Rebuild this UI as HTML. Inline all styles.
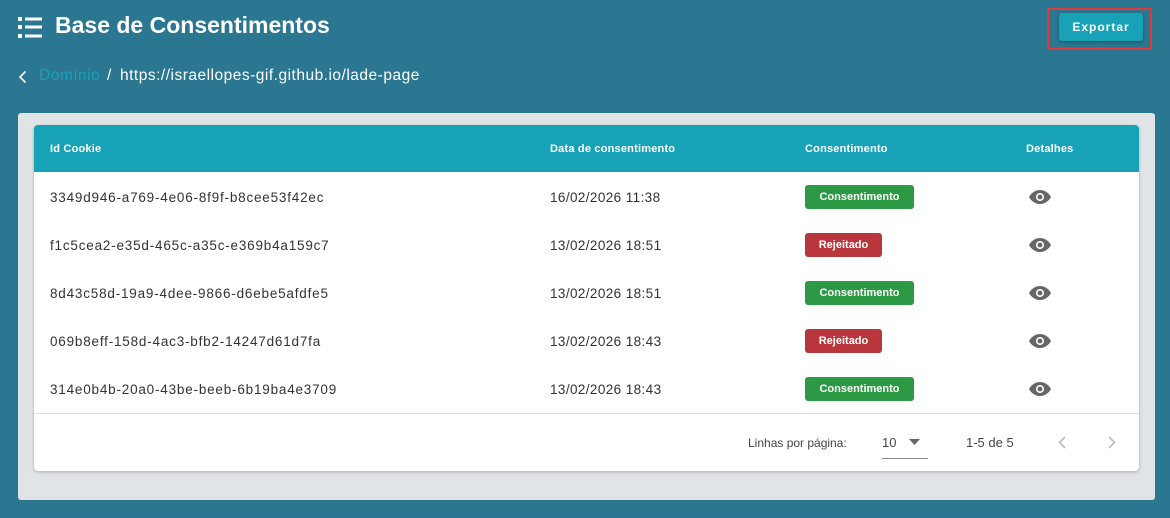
<!DOCTYPE html>
<html><head><meta charset="utf-8"><style>
*{margin:0;padding:0;box-sizing:border-box}
body{width:1170px;height:518px;background:#2b7691;font-family:"Liberation Sans",sans-serif;position:relative;overflow:hidden}
.a{position:absolute;white-space:nowrap}
.title{left:55px;top:12px;font-size:23px;font-weight:bold;color:#fff}
.bc{top:67px;font-size:15.5px;color:#fff;letter-spacing:0.5px}
.btnbox{left:1047px;top:8px;width:105px;height:42px;border:2px solid #e03a3e;border-radius:2px}
.btn{left:1059px;top:13px;width:84px;height:28px;background:#17a2b8;border-radius:3px;color:#fff;font-size:12px;font-weight:bold;letter-spacing:1px;text-align:center;line-height:28px;box-shadow:0 1px 3px rgba(0,0,0,.3)}
.panel{left:18px;top:113px;width:1137px;height:387px;background:#e1e4e7;border-radius:3px}
.card{left:34px;top:125px;width:1105px;height:346px;background:#fff;border-radius:4px;box-shadow:0 1px 3px rgba(0,0,0,.25);overflow:hidden}
.hdr{left:0;top:0;width:1105px;height:47px;background:#17a2b8}
.h{top:18px;font-size:11px;font-weight:bold;color:#fff;letter-spacing:0.2px}
.c{font-size:13.5px;color:#333;letter-spacing:0.4px}
.id{letter-spacing:0.8px}
.badge{height:24px;line-height:24px;color:#fff;font-size:11px;font-weight:bold;border-radius:3px;text-align:center}
.g{background:#2c9a45;width:109px}
.r{background:#b8363c;width:77px}
.line{left:0;top:288px;width:1105px;height:1px;background:#e0e0e0}
.p{font-size:12px;color:#444}
</style></head><body>
<svg class="a" style="left:18px;top:17px" width="25" height="22" viewBox="0 0 25 22"><g fill="#fff"><rect x="0" y="0" width="4" height="4"/><rect x="0" y="8" width="4" height="4"/><rect x="0" y="17" width="4" height="4"/><rect x="7" y="0.5" width="17" height="3"/><rect x="7" y="8.5" width="17" height="3"/><rect x="7" y="17.5" width="17" height="3"/></g></svg>
<div class="a title">Base de Consentimentos</div>
<svg class="a" style="left:18px;top:70px" width="10" height="14" viewBox="0 0 10 14"><path d="M7.5 1.5L2 7l5.5 5.5" stroke="#fff" stroke-width="1.6" fill="none"/></svg>
<div class="a bc" style="left:39px;color:#17a2b8">Domínio</div>
<div class="a bc" style="left:107px">/</div>
<div class="a bc" style="left:120px">https://israellopes-gif.github.io/lade-page</div>
<div class="a btnbox"></div>
<div class="a btn">Exportar</div>
<div class="a panel"></div>
<div class="a card">
 <div class="a hdr"></div>
 <div class="a h" style="left:16px">Id Cookie</div>
 <div class="a h" style="left:516px">Data de consentimento</div>
 <div class="a h" style="left:771px">Consentimento</div>
 <div class="a h" style="left:992px">Detalhes</div>

 <div class="a c id" style="left:16px;top:65px">3349d946-a769-4e06-8f9f-b8cee53f42ec</div>
 <div class="a c" style="left:516px;top:65px">16/02/2026 11:38</div>
 <div class="a badge g" style="left:771px;top:60px">Consentimento</div>

 <div class="a c id" style="left:16px;top:113px">f1c5cea2-e35d-465c-a35c-e369b4a159c7</div>
 <div class="a c" style="left:516px;top:113px">13/02/2026 18:51</div>
 <div class="a badge r" style="left:771px;top:108px">Rejeitado</div>

 <div class="a c id" style="left:16px;top:161px">8d43c58d-19a9-4dee-9866-d6ebe5afdfe5</div>
 <div class="a c" style="left:516px;top:161px">13/02/2026 18:51</div>
 <div class="a badge g" style="left:771px;top:156px">Consentimento</div>

 <div class="a c id" style="left:16px;top:209px">069b8eff-158d-4ac3-bfb2-14247d61d7fa</div>
 <div class="a c" style="left:516px;top:209px">13/02/2026 18:43</div>
 <div class="a badge r" style="left:771px;top:204px">Rejeitado</div>

 <div class="a c id" style="left:16px;top:257px">314e0b4b-20a0-43be-beeb-6b19ba4e3709</div>
 <div class="a c" style="left:516px;top:257px">13/02/2026 18:43</div>
 <div class="a badge g" style="left:771px;top:252px">Consentimento</div>

 <svg class="a" style="left:995px;top:65px" width="22" height="240" viewBox="0 0 22 240">
  <defs><g id="e"><path d="M11 0C6 0 2 3.2 0 7c2 3.8 6 7 11 7s9-3.2 11-7C20 3.2 16 0 11 0z" fill="#666"/><circle cx="11" cy="7" r="4" fill="#fff"/><circle cx="11" cy="7" r="2.4" fill="#666"/></g></defs>
  <use href="#e" y="0"/><use href="#e" y="48"/><use href="#e" y="96"/><use href="#e" y="144"/><use href="#e" y="192"/>
 </svg>

 <div class="a line"></div>
 <div class="a p" style="left:714px;top:311px">Linhas por página:</div>
 <div class="a p" style="left:848px;top:310px;font-size:13px">10</div>
 <svg class="a" style="left:875px;top:314px" width="12" height="6"><path d="M0 0h11L5.5 6z" fill="#666"/></svg>
 <div class="a" style="left:848px;top:333px;width:46px;height:1px;background:#888"></div>
 <div class="a p" style="left:932px;top:310px;font-size:13px">1-5 de 5</div>
 <svg class="a" style="left:1024px;top:311px" width="8" height="13"><path d="M7 1L1.5 6.5 7 12" stroke="#bbb" stroke-width="1.6" fill="none"/></svg>
 <svg class="a" style="left:1074px;top:311px" width="8" height="13"><path d="M1 1l5.5 5.5L1 12" stroke="#bbb" stroke-width="1.6" fill="none"/></svg>
</div>
</body></html>
